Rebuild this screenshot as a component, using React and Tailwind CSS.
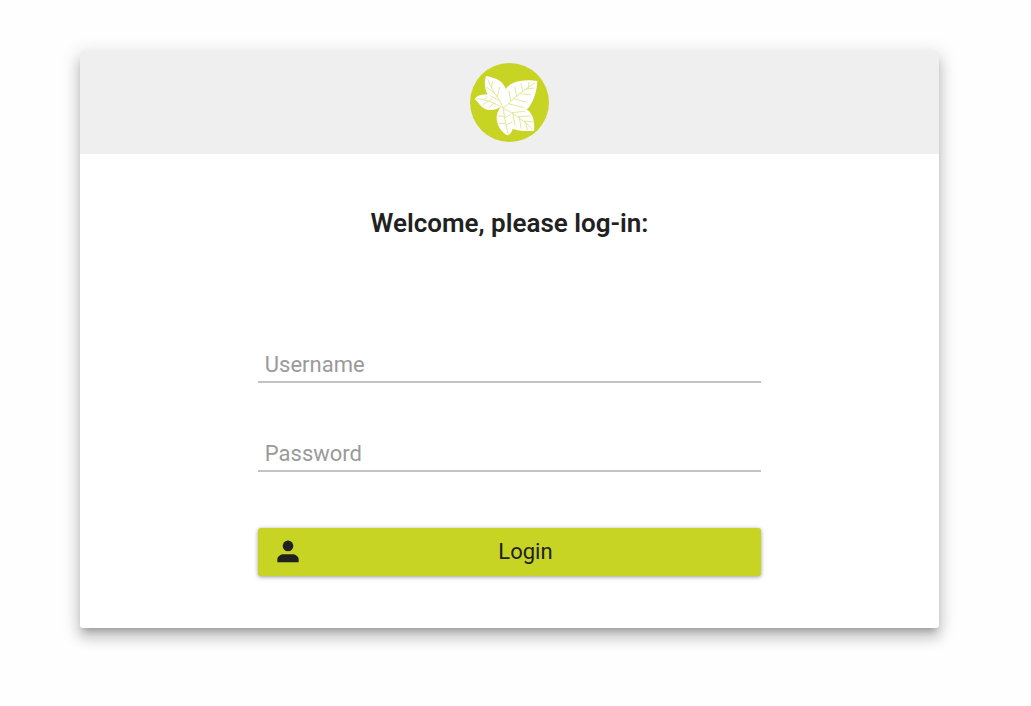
function LeafLogo() {
  return (
    <svg viewBox="30 26 237 237" className="size-[79px]" role="img" aria-label="Leaf logo">
      <circle cx="148.500" cy="144.500" r="118.500" fill="#c7d424" />
      <path
        fill="#fff"
        d="M78 65C72 83 73 102 83 121C66 119 53 123 44 133C56 145 63 158 75 164C90 170 109 166 122 158C111 172 107 188 112 205C117 221 128 236 143 243C153 238 157 231 158 223C176 230 198 231 222 230C224 211 222 192 213 178C210 172 206 168 200 166C219 148 231 112 232 80C211 76 181 76 159 86C148 91 141 98 138 104C134 97 129 88 121 81C109 72 93 68 78 65Z"
      />
      <g fill="none" stroke="#dde586" strokeWidth="2.500" strokeLinecap="round">
        <path d="M84 77C91 96 99 111 110 125C118 137 124 148 130 162" />
        <path d="M95 101L97 82M103 116L80 99M112 128L119 99M118 139L91 124" />
        <path d="M52 133C78 136 104 145 127 160" />
        <path d="M72 137L81 127M87 141L97 132M84 140L69 151M102 146L88 160" />
        <path d="M224 86C195 105 160 132 130 162" />
        <path d="M205 99L207 84M188 111L183 88M170 125L164 97M152 140L147 110M199 104L222 101M180 118L211 121M161 133L199 143M145 148L188 159" />
        <path d="M130 162C161 178 190 197 217 224" />
        <path d="M155 175L194 171M175 187L210 185M193 200L219 203M158 177L165 213M178 189L183 221M197 204L202 226" />
        <path d="M130 162C133 190 138 216 144 236" />
        <path d="M134 186L115 185M137 206L117 208M135 190L151 181M139 212L156 203" />
      </g>
    </svg>
  );
}

function Field({ id, label, type, autoComplete }) {
  return (
    <div className="grid items-end border-b-2 border-[#c2c2c2] text-[22px] leading-8">
      <input
        id={id}
        type={type}
        placeholder=" "
        autoComplete={autoComplete}
        className="peer col-start-1 row-start-1 h-9 w-full bg-transparent px-[7px] text-[#212121] outline-none"
      />
      <label
        htmlFor={id}
        className="invisible col-start-1 row-start-1 cursor-text px-[7px] text-[#9a9a9a] peer-placeholder-shown:visible"
      >
        {label}
      </label>
    </div>
  );
}

export default function App() {
  return (
    <main className="min-h-screen bg-[#fefefe] pt-[51px] pr-[92px] pb-[78px] pl-20 font-['Roboto',sans-serif] text-[#212121]">
      <section className="overflow-hidden rounded-[3px] bg-white shadow-[0_6px_6px_-3px_rgba(0,0,0,0.2),0_10px_13px_1px_rgba(0,0,0,0.14),0_4px_18px_3px_rgba(0,0,0,0.12)]">
        <header className="flex justify-center bg-[#efefef] p-3">
          <LeafLogo />
        </header>
        <form className="mx-auto w-[58.6%] pt-[53px] pb-[52px]" onSubmit={(event) => event.preventDefault()}>
          <h1 className="text-center text-[26px] leading-8 font-semibold">Welcome, please log-in:</h1>
          <div className="mt-[106px] flex flex-col gap-[51px]">
            <Field id="username" label="Username" type="text" autoComplete="username" />
            <Field id="password" label="Password" type="password" autoComplete="current-password" />
          </div>
          <button
            type="submit"
            className="mt-14 flex h-12 w-full items-center rounded-[3px] bg-[#c7d424] px-[14px] pb-[2px] text-[22px] shadow-[0_1px_4px_rgba(0,0,0,0.4)]"
          >
            <svg viewBox="0 0 24 24" className="size-8 shrink-0" fill="currentColor" aria-hidden="true">
              <circle cx="12" cy="8.200" r="4" />
              <path d="M4 20.500v-2c0-2.500 2.500-4 5-4h6c2.500 0 5 1.500 5 4v2z" />
            </svg>
            <span className="grow text-center">Login</span>
          </button>
        </form>
      </section>
    </main>
  );
}
